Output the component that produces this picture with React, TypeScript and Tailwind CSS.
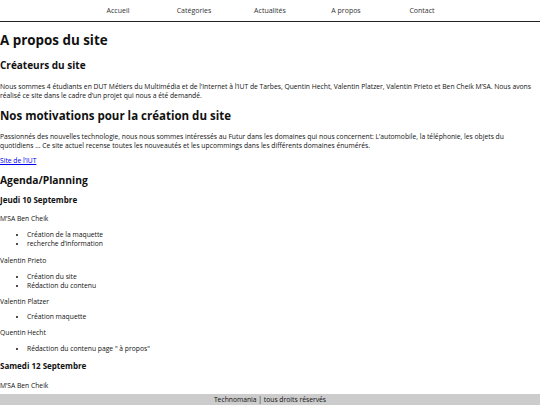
import React from 'react'

const nav = ['Accueil', 'Catégories', 'Actualités', 'A propos', 'Contact']

type Person = { name: string; tasks: string[]; nameMt: string; listMt: string }

const jeudi: Person[] = [
  {
    name: 'M’SA Ben Cheik',
    tasks: ['Création de la maquette', 'recherche d’information'],
    nameMt: 'mt-[9px]',
    listMt: 'mt-[7px]',
  },
  { name: 'Valentin Prieto', tasks: ['Création du site', 'Rédaction du contenu'], nameMt: 'mt-[8px]', listMt: 'mt-[7px]' },
  { name: 'Valentin Platzer', tasks: ['Création maquette'], nameMt: 'mt-[7px]', listMt: 'mt-[6px]' },
  { name: 'Quentin Hecht', tasks: ['Rédaction du contenu page " à propos"'], nameMt: 'mt-[7px]', listMt: 'mt-[7px]' },
]

export default function App() {
  return (
    <div className="min-h-[405px] bg-white text-[#111] font-['Open_Sans',sans-serif] text-[6.75px] leading-[9px]">
      <header className="h-[22px] border-b border-[#222]">
        <ul className="flex justify-center h-[21px] items-center text-[7px]">
          {nav.map((item) => (
            <li key={item} className="w-[76px] text-center text-[#333]">
              <a href="#">{item}</a>
            </li>
          ))}
        </ul>
      </header>

      <main className="pr-[4px] pb-[20px]">
        <h1 className="mt-[10px] text-[13.4px] leading-[16px] font-bold">A propos du site</h1>

        <h3 className="mt-[11px] text-[10px] leading-[12px] font-bold">Créateurs du site</h3>
        <p className="mt-[11px]">
          Nous sommes 4 étudiants en DUT Métiers du Multimédia et de l’Internet à l’IUT de Tarbes, Quentin Hecht,
          Valentin Platzer, Valentin Prieto et Ben Cheik M’SA. Nous avons réalisé ce site dans le cadre d’un projet qui
          nous a été demandé.
        </p>

        <h2 className="mt-[9px] text-[11.5px] leading-[14px] font-bold">Nos motivations pour la création du site</h2>
        <p className="mt-[9px]">
          Passionnés des nouvelles technologie, nous nous sommes intéressés au Futur dans les domaines qui nous
          concernent: L’automobile, la téléphonie, les objets du quotidiens ... Ce site actuel recense toutes les
          nouveautés et les upcommings dans les différents domaines énumérés.
        </p>
        <p className="mt-[6px]">
          <a href="#" className="text-[#0000ee] underline">Site de l’IUT</a>
        </p>

        <h2 className="mt-[8px] text-[10.3px] leading-[14px] font-bold">Agenda/Planning</h2>
        <h4 className="mt-[8px] text-[8px] leading-[10px] font-bold">Jeudi 10 Septembre</h4>

        {jeudi.map((p) => (
          <div key={p.name}>
            <p className={p.nameMt}>{p.name}</p>
            <ul className={`list-disc pl-[27px] ${p.listMt}`}>
              {p.tasks.map((t) => (
                <li key={t}>{t}</li>
              ))}
            </ul>
          </div>
        ))}

        <h4 className="mt-[8px] text-[8px] leading-[10px] font-bold">Samedi 12 Septembre</h4>
        <p className="mt-[10px]">M’SA Ben Cheik</p>
      </main>

      <footer className="fixed bottom-0 left-0 right-0 h-[11px] bg-[#cccccc] text-center leading-[11px] text-[#111]">
        Technomania | tous droits réservés
      </footer>
    </div>
  )
}
